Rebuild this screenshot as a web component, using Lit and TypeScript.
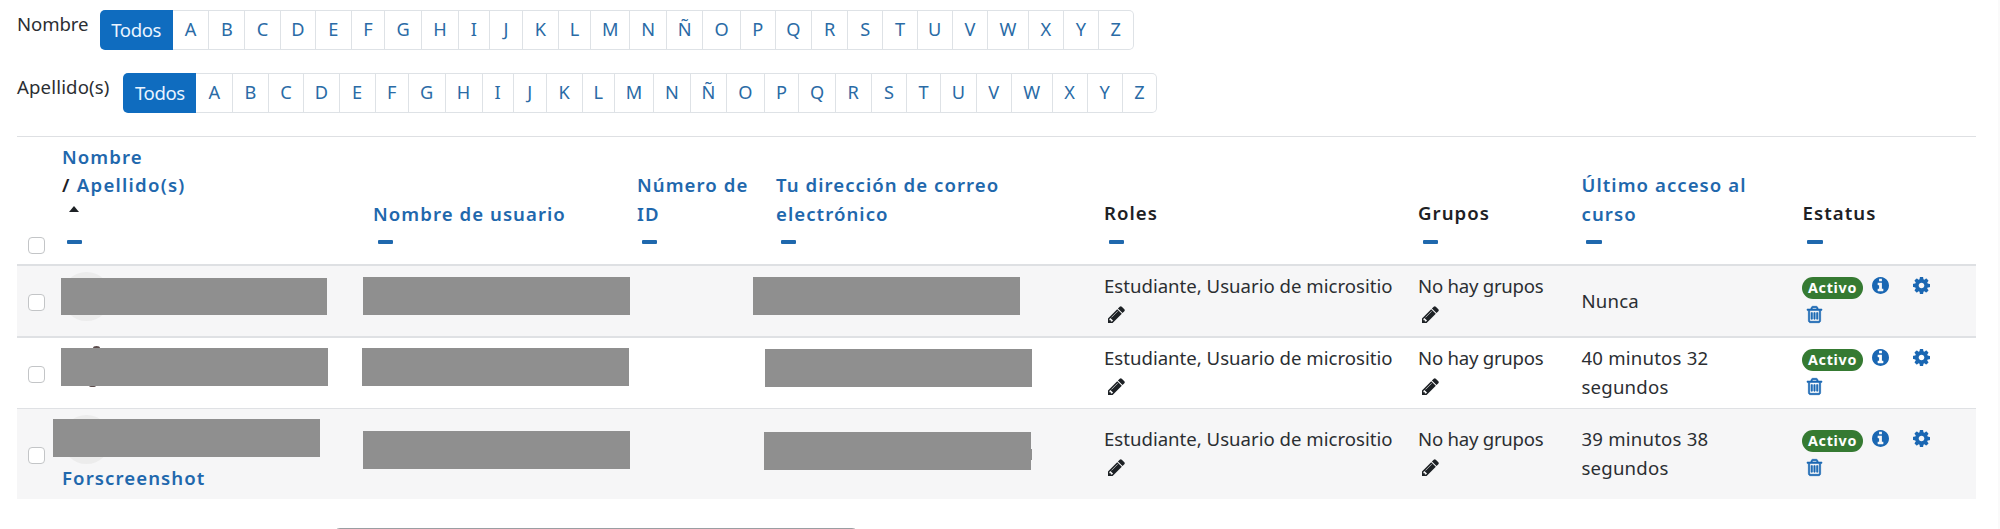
import { LitElement, html, css, svg, nothing } from "lit";
import { customElement, property } from "lit/decorators.js";
import { styleMap } from "lit/directives/style-map.js";

const ICONS = {
  pencil: {
    box: "128 128 1536 1536",
    d: "M491 1536l91-91-235-235-91 91v107h128v128h107zm523-928q0-22-22-22-10 0-17 7l-542 542q-7 7-7 17 0 22 22 22 10 0 17-7l542-542q7-7 7-17zm-54-192l416 416-832 832h-416v-416zm683 96q0 53-37 90l-166 166-416-416 166-165q36-38 90-38 53 0 91 38l235 234q37 39 37 91z",
  },
  info: {
    box: "128 128 1536 1536",
    d: "M1152 1376v-160q0-14-9-23t-23-9h-96v-512q0-14-9-23t-23-9h-320q-14 0-23 9t-9 23v160q0 14 9 23t23 9h96v320h-96q-14 0-23 9t-9 23v160q0 14 9 23t23 9h448q14 0 23-9t9-23zm-128-896v-160q0-14-9-23t-23-9h-192q-14 0-23 9t-9 23v160q0 14 9 23t23 9h192q14 0 23-9t9-23zm640 416q0 209-103 385.5t-279.5 279.5-385.5 103-385.5-103-279.5-279.5-103-385.5 103-385.5 279.5-279.5 385.5-103 385.5 103 279.5 279.5 103 385.5z",
  },
  cog: {
    box: "128 128 1536 1536",
    d: "M1152 896q0-106-75-181t-181-75-181 75-75 181 75 181 181 75 181-75 75-181zm512-109v222q0 12-8 23t-20 13l-185 28q-19 54-39 91 35 50 107 138 10 12 10 25t-9 23q-27 37-99 108t-94 71q-12 0-26-9l-138-108q-44 23-91 38-16 136-29 186-7 28-36 28h-222q-14 0-24.5-8.5t-11.5-21.5l-28-184q-49-16-90-37l-141 107q-10 9-25 9-14 0-25-11-126-114-165-168-7-10-7-23 0-12 8-23 15-21 51-66.5t54-70.5q-27-50-41-99l-183-27q-13-2-21-12.5t-8-23.5v-222q0-12 8-23t19-13l186-28q14-46 39-92-40-57-107-138-10-12-10-24 0-10 9-23 26-36 98.5-107.5t94.5-71.5q13 0 26 10l138 107q44-23 91-38 16-136 29-186 7-28 36-28h222q14 0 24.5 8.5t11.5 21.5l28 184q49 16 90 37l142-107q9-9 24-9 13 0 25 10 129 119 165 170 7 8 7 22 0 12-8 23-15 21-51 66.5t-54 70.5q26 50 41 98l183 28q13 2 21 12.5t8 23.5z",
  },
  trash: {
    box: "192 128 1408 1536",
    d: "M704 736v576q0 14-9 23t-23 9h-64q-14 0-23-9t-9-23v-576q0-14 9-23t23-9h64q14 0 23 9t9 23zm256 0v576q0 14-9 23t-23 9h-64q-14 0-23-9t-9-23v-576q0-14 9-23t23-9h64q14 0 23 9t9 23zm256 0v576q0 14-9 23t-23 9h-64q-14 0-23-9t-9-23v-576q0-14 9-23t23-9h64q14 0 23 9t9 23zm128 724v-948h-896v948q0 22 7 40.5t14.5 27 10.5 8.5h832q3 0 10.5-8.5t14.5-27 7-40.5zm-672-1076h448l-48-117q-7-9-17-11h-317q-10 2-17 11zm928 32v64q0 14-9 23t-23 9h-96v948q0 83-47 143.5t-113 60.5h-832q-66 0-113-58.5t-47-141.5v-952h-96q-14 0-23-9t-9-23v-64q0-14 9-23t23-9h309l70-167q15-37 54-63t79-26h320q40 0 79 26t54 63l70 167h309q14 0 23 9t9 23z",
  },
};

@customElement("fa-icon")
class FaIcon extends LitElement {
  @property() name: keyof typeof ICONS = "info";
  static styles = css`
    :host { display: block; width: 17px; height: 17px; }
    svg { display: block; width: 100%; height: 100%; fill: currentColor; overflow: visible; }
    .trash { stroke: currentColor; stroke-width: 56; }
  `;
  render() {
    const icon = ICONS[this.name];
    return html`<svg class=${this.name} viewBox=${icon.box}>${svg`<path d=${icon.d}></path>`}</svg>`;
  }
}

// Each letter with the width of its page link.
const LETTERS: [string, number][] = [
  ["A", 36.7], ["B", 35.7], ["C", 35.5], ["D", 35.2], ["E", 36], ["F", 33.3], ["G", 36.7],
  ["H", 37.1], ["I", 31], ["J", 33.2], ["K", 35.7], ["L", 32.5], ["M", 39], ["N", 36.8],
  ["Ñ", 36.3], ["O", 37.5], ["P", 34.8], ["Q", 36.4], ["R", 36], ["S", 35.2], ["T", 34.4],
  ["U", 35.2], ["V", 35.2], ["W", 41], ["X", 34.8], ["Y", 35.2], ["Z", 34.5],
];

@customElement("initials-bar")
class InitialsBar extends LitElement {
  @property() label = "";
  static styles = css`
    :host { display: flex; align-items: flex-start; height: 40px; color: #2b2e32; }
    .label { width: var(--label-width, 82.5px); line-height: 29px; margin-top: -1px; letter-spacing: var(--label-spacing, -0.1px); }
    .pages { display: flex; height: 40px; box-sizing: border-box; }
    .page {
      box-sizing: border-box; height: 40px; line-height: 37px; text-align: center;
      border: 1.5px solid #dee2e6; border-left-width: 0; color: #2a6ba6; background: #fff; font-size: 18.2px;
    }
    .page:last-child { border-radius: 0 5px 5px 0; }
    .all {
      box-sizing: border-box; width: 73.3px; height: 40px; line-height: 40px; text-align: center;
      border-radius: 5px 0 0 5px; background: #0f6cbf; color: #e9f4ff; letter-spacing: -0.4px;
    }
  `;
  render() {
    return html`
      <span class="label">${this.label}</span>
      <div class="pages">
        <div class="all">Todos</div>
        ${LETTERS.map(([l, w]) => html`<div class="page" style=${styleMap({ width: `${w}px` })}>${l}</div>`)}
      </div>`;
  }
}

interface Bar { x: number; y: number; w: number; h: number; }
interface Row { kind: string; bars: Bar[]; surname?: string; access: string[]; avatar: boolean; }

// Redaction bars are placed relative to their row's top left corner.
const ROWS: Row[] = [
  {
    kind: "odd first", avatar: true, access: ["Nunca"],
    bars: [{ x: 44, y: 12, w: 266, h: 37 }, { x: 346, y: 10.5, w: 267, h: 38 }, { x: 736, y: 11, w: 267, h: 38 }],
  },
  {
    kind: "even", avatar: false, access: ["40 minutos 32", "segundos"],
    bars: [{ x: 44, y: 10, w: 267, h: 38 }, { x: 345, y: 10, w: 267, h: 38 }, { x: 748, y: 11, w: 267, h: 38 }],
  },
  {
    kind: "odd last", avatar: true, surname: "Forscreenshot", access: ["39 minutos 38", "segundos"],
    bars: [
      { x: 36, y: 10, w: 267, h: 38 }, { x: 346, y: 22, w: 267, h: 38 },
      { x: 747, y: 23, w: 267, h: 38 }, { x: 1014, y: 40, w: 1, h: 11 },
    ],
  },
];

@customElement("app-root")
class AppRoot extends LitElement {
  static styles = css`
    :host {
      display: block; box-sizing: border-box; height: 529px; overflow: hidden; background: #fff;
      padding: 10px 22px 0 17px; border-right: 2px solid #fafafa;
      font: 400 18.6px/29px "Noto Sans", sans-serif; color: #2b2e32;
    }
    .second { margin-top: 23px; --label-width: 106.2px; --label-spacing: 0.15px; }
    .table { margin-top: 23px; width: 1959px; }
    .row {
      position: relative; display: grid; box-sizing: border-box;
      grid-template-columns: 45px 311px 264px 139px 328px 314px 163.5px 221px 1fr;
    }
    .head { height: 130px; border-top: 1.5px solid #dee0e3; border-bottom: 2px solid #dee0e3; font-weight: 600; letter-spacing: 1.05px; }
    .head .cell { display: flex; flex-direction: column; justify-content: flex-end; padding-bottom: 20px; color: #1f68ad; white-space: nowrap; }
    .head .check { padding-bottom: 10px; }
    .head .plain { color: #1d2125; }
    .plain .title { margin-bottom: 1px; }
    .slash { color: #1d2125; }
    .name .title { line-height: 28.5px; }
    .last-name { letter-spacing: 1.25px; }
    .caret { width: 0; height: 0; margin: 6px 0 28.5px 6.5px; border: 5.7px solid transparent; border-top: 0; border-bottom: 6.3px solid #1d2125; }
    .dash { width: 15.5px; height: 4px; margin: 12px 0 0 4.5px; border-radius: 1px; background: #1f68ad; }
    .caret + .dash { margin-top: 0; }
    .box { width: 17px; height: 17px; box-sizing: border-box; margin-left: 11px; border: 1.5px solid #c3c5c7; border-radius: 4px; background: #fff; }
    .odd { background: #f6f6f7; }
    .first { height: 72px; border-bottom: 2px solid #dfe1e4; padding-top: 5px; }
    .even { height: 71px; border-bottom: 1.5px solid #dfe1e4; padding-top: 4.5px; }
    .last { height: 90px; padding-top: 14.5px; }
    .row .box { margin-top: 23px; }
    .head .box { margin-top: 0; }
    .first .access { padding-top: 15px; }
    .access { letter-spacing: 0.2px; }
    .groups { letter-spacing: -0.25px; }
    .tool { display: flex; align-items: center; height: 29px; padding-left: 4px; color: #1d2125; }
    .status { display: flex; align-items: flex-start; height: 29px; padding-top: 6px; box-sizing: border-box; color: #1a67b3; }
    .badge {
      width: 61px; height: 22px; box-sizing: border-box; margin-left: -0.5px; border-radius: 11px; background: #357a32;
      color: #fff; font-weight: 700; font-size: 14.3px; line-height: 22px; text-align: center; letter-spacing: 0.7px;
    }
    .info { margin-left: 9px; }
    .cog { margin-left: 24px; }
    .trash { width: 15px; }
    .blue { color: #1a67b3; }
    .surname { margin-top: 39.5px; color: #1f68ad; font-weight: 600; letter-spacing: 1.08px; }
    .avatar { position: absolute; left: 45px; top: 6px; width: 49px; height: 49px; border-radius: 50%; background: #ececec; }
    .speck { position: absolute; left: 76px; top: 8px; width: 7px; height: 4px; border-radius: 50%; background: #5c4c4c; }
    .speck.low { left: 72px; top: 46px; height: 3px; }
    .bar { position: absolute; background: #8f8f8f; }
    .footer { box-sizing: border-box; width: 526px; height: 40px; margin: 28.5px 0 0 316px; border: 1.5px solid #9a9ea2; border-radius: 7px; background: #fff; }
  `;

  private head(text: string[], kind = "") {
    return html`<div class="cell ${kind}">${text.map((t) => html`<div class="title">${t}</div>`)}<div class="dash"></div></div>`;
  }

  private row(r: Row) {
    return html`
      <div class="row ${r.kind}">
        <div><div class="box"></div></div>
        <div>${r.surname ? html`<div class="surname">${r.surname}</div>` : nothing}</div>
        <div></div><div></div><div></div>
        <div><div class="roles">Estudiante, Usuario de micrositio</div><div class="tool"><fa-icon name="pencil"></fa-icon></div></div>
        <div><div class="groups">No hay grupos</div><div class="tool"><fa-icon name="pencil"></fa-icon></div></div>
        <div class="access">${r.access.map((a) => html`<div>${a}</div>`)}</div>
        <div>
          <div class="status">
            <div class="badge">Activo</div>
            <fa-icon class="info" name="info"></fa-icon><fa-icon class="cog" name="cog"></fa-icon>
          </div>
          <div class="tool blue"><fa-icon class="trash" name="trash"></fa-icon></div>
        </div>
        ${r.avatar ? html`<div class="avatar"></div>` : html`<div class="speck"></div><div class="speck low"></div>`}
        ${r.bars.map((b) => html`<div class="bar" style=${styleMap({ left: `${b.x}px`, top: `${b.y}px`, width: `${b.w}px`, height: `${b.h}px` })}></div>`)}
      </div>`;
  }

  render() {
    return html`
      <initials-bar label="Nombre"></initials-bar>
      <initials-bar class="second" label="Apellido(s)"></initials-bar>
      <div class="table">
        <div class="row head">
          <div class="cell check"><div class="box"></div></div>
          <div class="cell name">
            <div class="title">Nombre</div>
            <div class="title last-name"><span class="slash">/</span> Apellido(s)</div>
            <div class="caret"></div><div class="dash"></div>
          </div>
          ${this.head(["Nombre de usuario"])}
          ${this.head(["Número de", "ID"])}
          ${this.head(["Tu dirección de correo", "electrónico"])}
          ${this.head(["Roles"], "plain")}
          ${this.head(["Grupos"], "plain")}
          ${this.head(["Último acceso al", "curso"])}
          ${this.head(["Estatus"], "plain")}
        </div>
        ${ROWS.map((r) => this.row(r))}
      </div>
      <div class="footer"></div>`;
  }
}
